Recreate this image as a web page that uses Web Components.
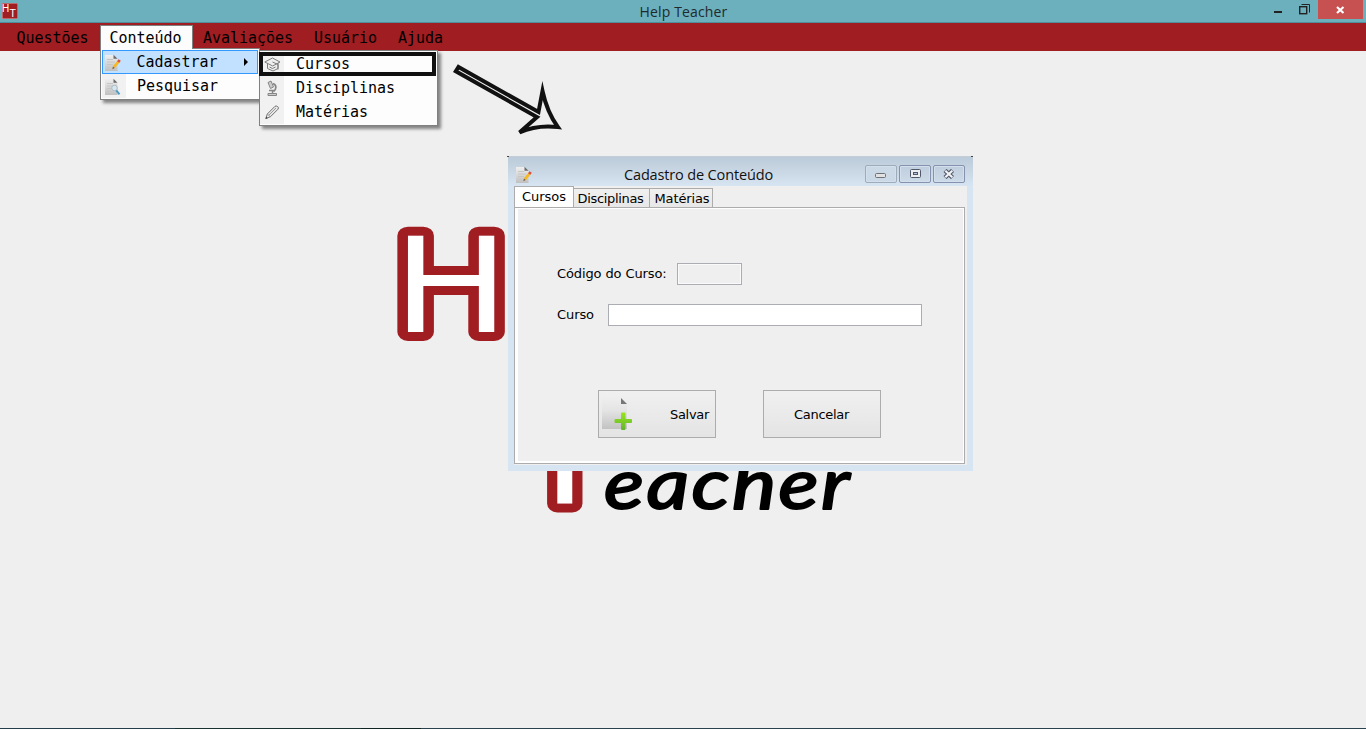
<!DOCTYPE html>
<html lang="pt">
<head>
<meta charset="utf-8">
<title>Help Teacher</title>
<style>
html,body{margin:0;height:100%;overflow:hidden;background:#efefef}
</style>
</head>
<body>
<help-teacher></help-teacher>
<script>
function define(name, html, setup) {
  const t = document.createElement('template');
  t.innerHTML = html;
  customElements.define(name, class extends HTMLElement {
    constructor() {
      super();
      this.attachShadow({mode: 'open'}).append(t.content.cloneNode(true));
    }
    connectedCallback() { if (setup) setup.call(this, this.shadowRoot); }
  });
}

/* Text run whose tracking is adjusted so that it spans exactly its width. */
define('fit-text', `<style>:host{display:inline-block;white-space:pre;flex:none}span{display:inline-block}</style><span><slot></slot></span>`, function (r) {
  const w = +this.getAttribute('w'), s = r.querySelector('span');
  if (!w) return;
  const n = this.textContent.length, now = s.getBoundingClientRect().width;
  s.style.letterSpacing = ((w - now) / n) + 'px';
  this.style.width = w + 'px';
});

/* Small pictograms */
const page = `<path d="M1 1h8.500l4 4v12H1z" fill="url(#g)"/><path d="M9.500 .8v4h4z" fill="#6a6a6a"/><path d="M3 5.500h6M3 8h8M3 10.500h6M3 13h4" stroke="#c6c6c6" stroke-width="1"/>`;
const grad = `<defs><linearGradient id="g" x2="0" y2="1"><stop offset="0" stop-color="#efefef"/><stop offset="1" stop-color="#c0c0c0"/></linearGradient></defs>`;
const icons = {
  edit: grad + page + `<path d="M10 13.200L14.500 7.500" stroke="#f6b91f" stroke-width="2.800"/><path d="M14.200 8L15.700 6" stroke="#dd4f3e" stroke-width="2.800"/><path d="M8.300 15.200l.6-2.700 2 1.500z" fill="#806038"/>`,
  search: grad + page + `<circle cx="10.500" cy="10" r="2.800" fill="#d5e8f2" stroke="#b0bcc4"/><path d="M12.300 12.300l3.200 4" stroke="#4d9cc6" stroke-width="2"/>`,
  cap: `<g stroke="#7c7c7c" stroke-width="1" fill="#eee"><path d="M3.500 6v6.500l5.500 2.500 5-2.500V6z"/><path d="M.8 6l7.700-4 7.500 4-7.300 4z"/><path d="M8.500 6l5.500 2.500v5" fill="none"/><path d="M5.500 11l3 1.500 3-1.500" fill="none"/></g>`,
  micro: `<g stroke="#858585" fill="#ccc"><path d="M4 2.500l3-1.500 2.500 6-3 1.500z"/><path d="M9 3.500c4 1.500 3.500 6 .5 8" fill="none" stroke-width="1.700"/><path d="M5 10.500h5M8.500 11v3" fill="none" stroke-width="1.400"/><path d="M4 13.500h8.500v2H4z"/></g>`,
  pencil: `<path d="M1.800 14.500l1.500-4.500L11 2.300q1.200-.8 2.700.3t.2 2.700L6.500 12.700z" fill="#e8e8e8" stroke="#707070"/><path d="M5 11l7-7M3.300 10l3 2.700" stroke="#999" fill="none"/><path d="M1.500 15l.7-2.300 1.600 1.600z" fill="#444"/>`
};
define('ht-icon', `<style>:host{display:block;flex:none;width:17px;height:17px}svg{display:block;width:100%;height:100%}</style><svg viewBox="0 0 17 17" fill="none"></svg>`, function (r) {
  r.querySelector('svg').innerHTML = icons[this.getAttribute('name')];
});

define('title-bar', `<style>
:host{display:flex;height:22px;border-bottom:1px solid #4f8e9b;background:#6cafbd;align-items:flex-start;box-sizing:content-box}
.logo{flex:none;margin:3px 0 0 2px}
.t{flex:1;display:flex;justify-content:center;padding-left:75px;font:14px/23px "Open Sans",sans-serif;color:#202a2c}
.min{width:8px;height:2px;background:#222;margin:11px 16px 0 0}
.x{width:45px;height:19px;background:#c75050;margin-right:3px;display:flex;align-items:center;justify-content:center}
</style>
<svg class="logo" width="16" height="16"><rect width="16" height="16" fill="#c98a8c"/><rect x=".7" y=".7" width="14.600" height="14.600" fill="#a01d22"/><g fill="#fff" font-family="Liberation Sans,sans-serif"><text x="0" y="9" font-size="10">H</text><text x="7.600" y="14" font-size="10.500">T</text></g></svg>
<div class="t"><fit-text w="88">Help Teacher</fit-text></div>
<div class="min"></div>
<svg width="11" height="11" style="margin:4px 8px 0 1px" fill="none" stroke="#222"><path d="M2.500 .5h8v8"/><rect x=".7" y="2.700" width="7" height="7" stroke-width="1.400"/></svg>
<div class="x"><svg width="9" height="8"><path d="M1 1l6.500 6M7.500 1L1 7" stroke="#fff" stroke-width="2.200"/></svg></div>`);

define('menu-bar', `<style>
:host{display:flex;height:28px;background:#a01d22;font:15px/30px "DejaVu Sans Mono",monospace;color:#000;padding-left:6px}
.i{padding:0 10.500px;height:28px}
.on{margin-top:2px;height:26px;box-sizing:border-box;line-height:25px;background:#fcfcfc;border:1px solid #808080;border-bottom:0;padding:0 10px 0 9px;margin-left:0}
</style>
<div class="i" style="padding-right:11px"><fit-text w="72">Questões</fit-text></div><div class="i on"><fit-text w="72">Conteúdo</fit-text></div><div class="i" style="padding-left:10.500px"><fit-text w="90">Avaliações</fit-text></div><div class="i"><fit-text w="63">Usuário</fit-text></div><div class="i"><fit-text w="45">Ajuda</fit-text></div>`);

define('menu-item', `<style>
:host{display:flex;align-items:center;height:24px;box-sizing:border-box;font:15px/24px "DejaVu Sans Mono",monospace;color:#000}
.ic{width:24px;height:24px;display:flex;align-items:center;justify-content:center;background:#f1f1f1;flex:none;margin-right:11px}
:host([hot]){background:#c2e0ff;border:1px solid #3399ff}
:host([hot]) .ic{background:none;height:20px;width:22px;margin-right:11.500px}
:host([wide]) .ic{margin-right:12px}
svg{margin-left:auto;margin-right:8px;display:none}
:host([hot]) svg{display:block}
::slotted(ht-icon){margin-right:var(--nudge,0)}
</style><div class="ic"><slot name="icon"></slot></div><slot></slot><svg width="6" height="8"><path d="M1 0l4 4-4 4z"/></svg>`);

define('menu-popup', `<style>
:host{display:block;box-sizing:border-box;background:#fdfdfd;border:1px solid #808080;box-shadow:3px 3px 3px rgba(0,0,0,.45)}
</style><slot></slot>`);

define('text-box', `<style>:host{display:block;box-sizing:border-box;height:22px;border:1px solid #abadb3;background:#fff}:host([disabled]){background:#efefef;box-shadow:inset 0 0 0 1px #fafafa}</style>`);

define('push-button', `<style>:host{display:flex;align-items:center;box-sizing:border-box;width:118px;height:48px;border:1px solid #acacac;background:linear-gradient(#f0f0f0,#e4e4e4)}</style><slot></slot>`);

define('tab-strip', `<style>
:host{display:flex;align-items:flex-end;height:21px;font:13px/19px "DejaVu Sans",sans-serif;color:#000}
div{box-sizing:border-box;height:19px;border:1px solid #acacac;border-bottom:0;background:linear-gradient(#f0f0f0,#e7e7e7);display:flex;justify-content:center;margin-left:-1px;width:77px}
div.on{width:60px;height:22px;background:#fff;line-height:20px;margin:0 0 -1px}
</style><div class="on"><fit-text w="44">Cursos</fit-text></div><div style="padding-right:2px"><fit-text w="66">Disciplinas</fit-text></div><div style="width:64px;padding-left:2px"><fit-text w="55">Matérias</fit-text></div>`);

define('frame-button', `<style>:host{display:flex;align-items:center;justify-content:center;box-sizing:border-box;width:32px;height:18px;border:1px solid #8591ae;border-radius:2px;box-shadow:inset 0 0 0 1px #d3dfec;background:linear-gradient(#bfcedd,#cddae8);padding-right:1px}:host([dim]){border-color:#9eabba;background:#cbd8e6}</style><slot></slot>`);

define('course-dialog', `<style>
:host{display:flex;flex-direction:column;box-sizing:border-box;width:465px;height:315px;padding:0 6px 6px;background:#d7e4f1}
header{display:flex;height:30px;margin:0 -6px;padding:0 8px 0 7px;background:linear-gradient(#bccbd9,#d7e4f1);flex:none;box-sizing:border-box;border-top:1px solid #c3ced8}
header ht-icon{margin-top:8.500px}
.t{flex:1;display:flex;justify-content:center;font:14.500px/35px "Open Sans",sans-serif;color:#111}
.b{display:flex;gap:2px;padding-top:8px}
main{flex:1;background:#efefef;display:flex;flex-direction:column;padding:0 2px 1px 0}
.p{flex:1;border:1px solid #acacac;box-shadow:inset 3px 1px #fff,inset -1px -2px #fff;font:13px/22px "DejaVu Sans",sans-serif;color:#000;display:flex;flex-direction:column;padding:55px 42px 0;box-sizing:border-box}
.r{display:flex;height:22px;margin-bottom:19px}
.a{display:flex;gap:47px;margin:45px 0 0 41px}
.a fit-text{padding-top:2px}
.k{position:absolute;top:0;width:2px;height:1px;background:#444}
</style>
<i class="k" style="left:-1px"></i><i class="k" style="right:0"></i>
<header><ht-icon name="edit"></ht-icon><div class="t"><fit-text w="149">Cadastro de Conteúdo</fit-text></div>
<div class="b"><frame-button dim><svg width="12" height="6" style="margin-top:3px"><rect x=".5" y=".5" width="10" height="4" rx="1" fill="#e1e1e1" stroke="#6c7078"/></svg></frame-button>
<frame-button><svg width="12" height="10" fill="none" stroke="#51576a"><rect x="1.500" y=".5" width="10" height="8" rx="1" fill="#eceef2"/><rect x="4.500" y="3.500" width="4" height="2" fill="#b8c4dc"/></svg></frame-button>
<frame-button><svg width="12" height="10"><path d="M2 1.500l7.500 7M9.500 1.500L2 8.500" stroke="#51576a" stroke-width="4.400"/><path d="M2.300 1.800l7 6.400M9.300 1.800L2.300 8.200" stroke="#f2f3f5" stroke-width="2.200"/></svg></frame-button></div></header>
<main><tab-strip></tab-strip><div class="p">
<div class="r"><fit-text w="109.500">Código do Curso:</fit-text><text-box disabled style="width:65px;margin-left:10.500px"></text-box></div>
<div class="r"><fit-text w="37">Curso</fit-text><text-box style="width:314px;margin-left:14px"></text-box></div>
<div class="a"><push-button><svg width="34" height="36" style="margin-left:3px;flex:none"><defs><linearGradient id="p" x2="0" y2="1"><stop offset="0" stop-color="#eeeeee"/><stop offset=".4" stop-color="#e4e4e4"/><stop offset="1" stop-color="#c2c2c2"/></linearGradient><linearGradient id="q" x2="0" y2="1"><stop offset="0" stop-color="#98e619"/><stop offset="1" stop-color="#62b333"/></linearGradient></defs><path d="M0 2h19l6 6v25H0z" fill="url(#p)"/><path d="M19 2v6h6z" fill="#777"/><path d="M19 17.500q0-1 1-1h2.500q1 0 1 1V23h5.500q1 0 1 1v2q0 1-1 1h-5.500v6q0 1-1 1H20q-1 0-1-1v-6h-5.500q-1 0-1-1v-2q0-1 1-1H19z" fill="url(#q)"/></svg><fit-text w="39" style="margin-left:auto;margin-right:6px">Salvar</fit-text></push-button>
<push-button style="justify-content:center"><fit-text w="55" style="margin-right:1px">Cancelar</fit-text></push-button></div>
</div></main>`);

/* Desktop wallpaper: the product logotype and the pointer arrow */
define('desk-art', `<style>:host{display:block}svg{display:block}</style>
<svg width="1366" height="678" viewBox="0 51 1366 678">
<g font-family="DejaVu Sans,sans-serif" font-size="131.500" fill="#fff" stroke="#a01d22" stroke-width="18" stroke-linejoin="round" paint-order="stroke">
<text transform="translate(392.700 332) scale(1.180 1)">H</text>
<text transform="translate(564.800 503) scale(1.140 1)" text-anchor="middle">T</text></g>
<text x="604" y="508.500" font-family="Lato,sans-serif" font-style="italic" font-weight="400" font-size="70" letter-spacing="2" textLength="248" lengthAdjust="spacingAndGlyphs" stroke="#000" stroke-width="2" stroke-linejoin="round">eacher</text>
<path d="M458.500 67L538.500 112L542.500 91Q547 112 557.800 127Q537 124.500 519.500 132.500L537 117L455.800 71.300Z" fill="#efefef" stroke="#111" stroke-width="4" stroke-miterlimit="6"/>
</svg>`);

define('help-teacher', `<style>
:host{display:flex;flex-direction:column;height:729px;width:1366px;position:relative;overflow:hidden;background:#efefef}
title-bar,menu-bar{flex:none}
desk-art{flex:1;min-height:0;overflow:hidden}
footer{height:1px;flex:none;background:linear-gradient(90deg,#243f4b 175px,#18332f 175px 361px,#102522 361px 421px,#29424d 421px)}
.m1,.m2,course-dialog{position:absolute}
.m1{left:100px;top:48px;width:160px;height:52px;padding:1px;--nudge:3px}
.m2{left:259px;top:50px;width:179px;height:76px;padding-top:1px}
.join{position:absolute;left:101px;top:47px;width:91px;height:3px;background:#fcfcfc}
.sel{position:absolute;left:259px;top:52px;width:177px;height:24px;box-sizing:border-box;border:4px solid #101010}
course-dialog{left:508px;top:156px}
</style>
<title-bar></title-bar><menu-bar></menu-bar><desk-art></desk-art><footer></footer>
<menu-popup class="m1"><menu-item hot><ht-icon slot="icon" name="edit"></ht-icon><fit-text w="81">Cadastrar</fit-text></menu-item><menu-item><ht-icon slot="icon" name="search"></ht-icon><fit-text w="81">Pesquisar</fit-text></menu-item></menu-popup>
<div class="join"></div>
<menu-popup class="m2"><menu-item wide><ht-icon slot="icon" name="cap"></ht-icon><fit-text w="54">Cursos</fit-text></menu-item><menu-item wide><ht-icon slot="icon" name="micro"></ht-icon><fit-text w="99">Disciplinas</fit-text></menu-item><menu-item wide><ht-icon slot="icon" name="pencil"></ht-icon><fit-text w="72">Matérias</fit-text></menu-item></menu-popup>
<div class="sel"></div>
<course-dialog></course-dialog>`);
</script>
</body>
</html>
